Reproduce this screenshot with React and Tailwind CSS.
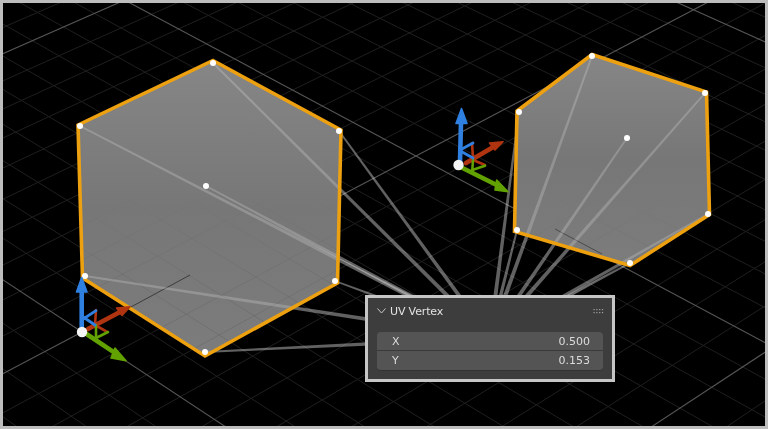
const font = { fontFamily: '"DejaVu Sans", sans-serif' };

// ground plane: unit square between the major lines, mapped to screen
const corners = [[82, 332], [416, 156], [773, 347], [438, 567]];

function makeHomography([[x0, y0], [x1, y1], [x2, y2], [x3, y3]]) {
  const dx1 = x1 - x2, dx2 = x3 - x2, sx = x0 - x1 + x2 - x3;
  const dy1 = y1 - y2, dy2 = y3 - y2, sy = y0 - y1 + y2 - y3;
  const det = dx1 * dy2 - dx2 * dy1;
  const g = (sx * dy2 - dx2 * sy) / det;
  const h = (dx1 * sy - sx * dy1) / det;
  return [x1 - x0 + g * x1, x3 - x0 + h * x3, x0, y1 - y0 + g * y1, y3 - y0 + h * y3, y0, g, h, 1];
}

const H = makeHomography(corners);
const project = (u, v) => [
  H[0] * u + H[1] * v + H[2],
  H[3] * u + H[4] * v + H[5],
  H[6] * u + H[7] * v + H[8],
];

function gridLine(a, b) {
  const p = project(a[0], a[1]);
  const q = project(b[0], b[1]);
  const l = [p[1] * q[2] - p[2] * q[1], p[2] * q[0] - p[0] * q[2], p[0] * q[1] - p[1] * q[0]];
  return { x1: -10, y1: -(l[0] * -10 + l[2]) / l[1], x2: 780, y2: -(l[0] * 780 + l[2]) / l[1] };
}

const minorLines = [];
const majorLines = [];
for (let i = -25; i <= 25; i++) {
  const t = i / 10;
  const major = i % 10 === 0;
  const bucket = major ? majorLines : minorLines;
  bucket.push(gridLine([t, 0], [t, 1]));
  bucket.push(gridLine([0, t], [1, t]));
}

const leftHex = [[213, 63], [339, 131], [335, 281], [205, 352], [85, 276], [80, 126]];
const rightHex = [[592, 56], [705, 93], [708, 214], [630, 263], [517, 230], [519, 112]];
const leftOutline = "213,60.5 341,130 337.5,283 205,356 82.5,278 78,125";
const rightOutline = "592,54.5 706.5,92 709.5,214.5 630,265.5 514.5,231.5 517,111";
const leftCenter = [206, 186];
const rightCenter = [627, 138];
const panelMid = [490, 338];

// connector from a vertex to the panel, gets wider towards the panel
function taper([x, y]) {
  const [tx, ty] = panelMid;
  const len = Math.hypot(tx - x, ty - y);
  const nx = -(ty - y) / len;
  const ny = (tx - x) / len;
  const a = 0.9;
  const b = 2.2;
  return [
    [x + nx * a, y + ny * a],
    [tx + nx * b, ty + ny * b],
    [tx - nx * b, ty - ny * b],
    [x - nx * a, y - ny * a],
  ].map((p) => p.join(",")).join(" ");
}

const allPoints = [...leftHex, leftCenter, ...rightHex, rightCenter];

function Gizmo({ blue, red, green, origin }) {
  return (
    <g fill="none" strokeLinecap="round" strokeLinejoin="round">
      <path d={red.thin} stroke="#b03410" strokeWidth="2.6" />
      <path d={red.shaft} stroke="#b03410" strokeWidth="4.6" />
      <polygon points={red.head} fill="#b03410" stroke="#b03410" strokeWidth="1.6" />
      <path d={green.thin} stroke="#62a200" strokeWidth="2.6" />
      <path d={green.shaft} stroke="#62a200" strokeWidth="4.6" />
      <polygon points={green.head} fill="#62a200" stroke="#62a200" strokeWidth="1.6" />
      <path d={blue.thin} stroke="#2f80e0" strokeWidth="2.8" />
      <path d={blue.shaft} stroke="#2f80e0" strokeWidth="4.6" />
      <polygon points={blue.head} fill="#2f80e0" stroke="#2f80e0" strokeWidth="1.6" />
      <circle cx={origin[0]} cy={origin[1]} r="5.2" fill="#f4f4f4" />
    </g>
  );
}

function Viewport() {
  return (
    <svg className="block w-full h-full blur-[0.35px]" viewBox="3 3 762 423">
      <defs>
        <linearGradient id="hexFill" x1="0" y1="0" x2="0" y2="1">
          <stop offset="0" stopColor="#868686" />
          <stop offset="0.5" stopColor="#767776" />
          <stop offset="1" stopColor="#7c7c7c" />
        </linearGradient>
        <linearGradient id="gridFade" x1="0" y1="0" x2="0" y2="1">
          <stop offset="0.45" stopColor="#000000" />
          <stop offset="0.75" stopColor="#ffffff" />
        </linearGradient>
        <mask id="lowerPart" maskUnits="userSpaceOnUse" x="0" y="0" width="768" height="429">
          <rect x="0" y="0" width="768" height="429" fill="url(#gridFade)" />
        </mask>
        <clipPath id="hexClip">
          <polygon points={leftOutline} />
          <polygon points={rightOutline} />
        </clipPath>
      </defs>

      {/* floor grid */}
      {minorLines.map((l, i) => (
        <line key={i} {...l} stroke="#1f1f1f" strokeWidth="1" />
      ))}
      {majorLines.map((l, i) => (
        <line key={i} {...l} stroke="#565656" strokeWidth="1.1" />
      ))}

      {/* connectors on the floor */}
      {allPoints.map((p, i) => (
        <polygon key={i} points={taper(p)} fill="#ffffff" fillOpacity="0.38" />
      ))}

      <polygon points={leftOutline} fill="url(#hexFill)" />
      <polygon points={rightOutline} fill="url(#hexFill)" />

      {/* grid seen through the faces */}
      <g clipPath="url(#hexClip)" mask="url(#lowerPart)">
        {minorLines.map((l, i) => (
          <line key={i} {...l} stroke="#000000" strokeOpacity="0.09" strokeWidth="1" />
        ))}
      </g>
      <line x1="190" y1="275" x2="118" y2="314" stroke="#3c3c3c" strokeWidth="1" />
      <line x1="555" y1="229" x2="602" y2="254" stroke="#4a4a4a" strokeWidth="1" />

      {/* connectors over the faces */}
      <g clipPath="url(#hexClip)">
        {allPoints.map((p, i) => (
          <polygon key={i} points={taper(p)} fill="#ffffff" fillOpacity="0.2" />
        ))}
      </g>

      <polygon points={leftOutline} fill="none" stroke="#eda010" strokeWidth="3.6" />
      <polygon points={rightOutline} fill="none" stroke="#eda010" strokeWidth="3.6" />

      {allPoints.map(([x, y], i) => (
        <circle key={i} cx={x} cy={y} r="3" fill="#ffffff" />
      ))}

      <Gizmo
        origin={[82, 332]}
        blue={{
          shaft: "M81.7 330 L81.7 290",
          thin: "M81.7 320 L96 310.7 M81.7 316 L95 325",
          head: "81.7,277.5 76.5,292 87,292",
        }}
        red={{
          shaft: "M88 329 L120 312",
          thin: "M95 325 L96 310 M95 325 L106.7 331.7",
          head: "130,306.7 116.5,308 122,315.5",
        }}
        green={{
          shaft: "M85 333 L113 351.7",
          thin: "M96 325 L96 338 L108 332",
          head: "126,360.7 115,348 111,358",
        }}
      />
      <Gizmo
        origin={[458.5, 165]}
        blue={{
          shaft: "M460 162 L461 122",
          thin: "M460 150 L473 143 M461.7 151.7 L473 158",
          head: "461.5,108.5 456,123.5 467,123.5",
        }}
        red={{
          shaft: "M466 163 L495 146",
          thin: "M473 158 L472 143 M473 160 L485 165",
          head: "503,141.7 489.5,143 495,150",
        }}
        green={{
          shaft: "M460 166.7 L496.7 185",
          thin: "M473 160 L472.3 170 L485 165.7",
          head: "508,191.7 496.7,180 495,190",
        }}
      />
    </svg>
  );
}

function FieldRow({ label, value, divider }) {
  return (
    <div className={`flex h-[19px] items-center justify-between pl-[15px] pr-[13px] ${divider ? "border-b border-[#3a3a3a]" : ""}`}>
      <span>{label}</span>
      <span>{value}</span>
    </div>
  );
}

function UvPanel() {
  return (
    <div
      className="absolute left-[362px] top-[292px] w-[250px] h-[87px] border-[3px] border-[#c6c6c6] bg-[#3d3d3d] px-[9px] text-[11px] leading-none text-[#dcdcdc] blur-[0.25px]"
      style={font}
    >
      <div className="flex h-[26px] items-center justify-between">
        <div className="flex items-center gap-[4px]">
          <svg width="9" height="6" viewBox="0 0 9 6" fill="none" stroke="#c8c8c8" strokeWidth="1">
            <path d="M0.5 0.5 L4.5 5 L8.5 0.5" />
          </svg>
          <span className="text-[11px] tracking-[-0.15px] text-[#e2e2e2]">UV Vertex</span>
        </div>
        <svg className="mr-[-1px]" width="11" height="5" viewBox="0 0 11 5" fill="#a0a0a0">
          {[0.5, 3.3, 6.1, 8.9].map((x) => (
            <g key={x}>
              <rect x={x} y="0" width="1.2" height="1.2" />
              <rect x={x} y="3" width="1.2" height="1.2" />
            </g>
          ))}
        </svg>
      </div>
      <div className="mt-[8px] overflow-hidden rounded-[4px] bg-[#545454] border-b border-[#333333]">
        <FieldRow label="X" value="0.500" divider />
        <FieldRow label="Y" value="0.153" />
      </div>
    </div>
  );
}

export default function App() {
  return (
    <div className="relative w-[768px] h-[429px] overflow-hidden border-[3px] border-[#bdbdbd] bg-black">
      <Viewport />
      <UvPanel />
    </div>
  );
}
